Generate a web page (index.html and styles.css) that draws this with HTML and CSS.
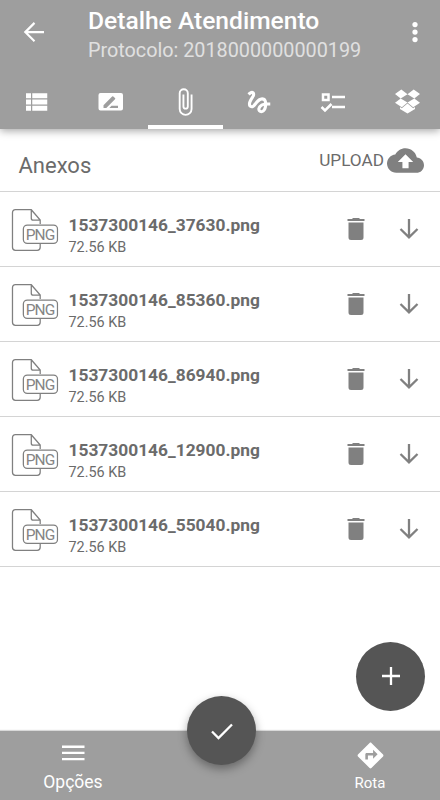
FILE: index.html
```html
<!DOCTYPE html>
<html lang="pt-BR">
<head>
  <meta charset="UTF-8" />
  <meta name="viewport" content="width=device-width, initial-scale=1.0"/>
  <title>Detalhe Atendimento</title>
  <link rel="stylesheet" href="styles.css">
</head>
<body>

  <!-- Shared icons -->
  <svg class="sprite">
    <symbol id="trash" viewBox="0 0 30 30"><path d="M7.500 8.500H22.500V23.500Q22.500 26 20 26H10Q7.500 26 7.500 23.500ZM6.500 5H11L12 4H18L19 5H23.500V7H6.500Z"/></symbol>
    <symbol id="download" viewBox="0 0 30 30"><path d="M15 5V23M6.500 15L15 23.300 23.500 15" fill="none" stroke="currentColor" stroke-width="2.300"/></symbol>
    <symbol id="file" viewBox="0 0 48 44">
      <path d="M29.5 16V12L20.500 1.500H4.500Q1.500 1.500 1.500 4.500V39.500Q1.500 42.500 4.500 42.500H26.500Q29.500 42.500 29.500 39.500V36M20.500 1.500V10Q20.500 12 22.500 12H29.500"/>
      <rect x="12.500" y="17" width="34.500" height="18.500" rx="4"/>
    </symbol>
  </svg>

  <header class="header">
    <div class="toolbar">
      <button class="back" aria-label="Voltar">
        <svg class="icon" viewBox="0 0 24 24"><path d="M20 11.200H7.200l5.800-5.800L11.800 4l-8 8 8 8 1.200-1.200L7.200 12.900H20z"/></svg>
      </button>
      <div class="heading">
        <h1>Detalhe Atendimento</h1>
        <p>Protocolo: 2018000000000199</p>
      </div>
      <button class="more" aria-label="Mais">
        <svg class="icon" viewBox="0 0 24 24"><circle cx="12" cy="6" r="2.100"/><circle cx="12" cy="12" r="2.100"/><circle cx="12" cy="18" r="2.100"/></svg>
      </button>
    </div>
    <nav class="tabs">
      <a class="tab"><svg class="icon" viewBox="0 0 24 24"><path d="M4 14h4v-4H4v4zm0 5h4v-4H4v4zM4 9h4V5H4v4zm5 5h12v-4H9v4zm0 5h12v-4H9v4zM9 5v4h12V5H9z"/></svg></a>
      <a class="tab"><svg class="icon" viewBox="0 0 30 30"><path fill-rule="evenodd" d="M4.500 6h20.500q2 0 2 2v13.500q0 2-2 2H4.500q-2 0-2-2V8q0-2 2-2zM7.500 18.200v2.800H10.300L19 12.300q.6-.6 0-1.200L17.300 9.500q-.6-.5-1.200 0zM15.500 18.800L13.300 21H22v-2.200z"/></svg></a>
      <a class="tab active"><svg class="icon" viewBox="0 0 24 24"><path d="M16.500 6V17.500A4 4 0 0 1 8.500 17.500V5A2.500 2.500 0 0 1 13.500 5V15.500A1 1 0 0 1 11.500 15.500V6H10V15.500A2.500 2.500 0 0 0 15 15.500V5A4 4 0 0 0 7 5V17.500A5.500 5.500 0 0 0 18 17.500V6Z"/></svg></a>
      <a class="tab"><svg class="icon" viewBox="0 0 24 24"><path d="M4.590 6.890c.7-.71 1.400-1.350 1.710-1.220.5.2 0 1.030-.3 1.520-.25.42-2.860 3.890-2.860 6.310 0 1.280.48 2.340 1.340 2.980.75.56 1.740.73 2.640.46 1.070-.31 1.950-1.400 3.060-2.770 1.210-1.490 2.830-3.440 4.080-3.440 1.630 0 1.650 1.010 1.760 1.790-3.780.64-5.380 3.670-5.380 5.370 0 1.700 1.440 3.090 3.210 3.090 1.630 0 4.290-1.330 4.690-6.100H21v-2.500h-2.470c-.15-1.650-1.090-4.200-4.030-4.200-2.250 0-4.180 1.910-4.940 2.840-.58.73-2.060 2.480-2.290 2.720-.25.3-.68.84-1.110.84-.45 0-.72-.83-.36-1.920.35-1.090 1.400-2.860 1.850-3.520.78-1.140 1.300-1.920 1.300-3.280C8.950 3.690 7.310 3 6.440 3 5.120 3 3.970 4 3.720 4.250c-.36.36-.66.66-.88.93l1.750 1.710zm9.290 11.660c-.31 0-.74-.26-.74-.72 0-.6.73-2.200 2.870-2.760-.3 2.690-1.430 3.480-2.130 3.480z"/></svg></a>
      <a class="tab"><svg class="icon line" viewBox="0 0 30 30"><path d="M5 7.500H10.500V13H5ZM14 10H27M14 20H27M3.500 20L7 23.500 13.500 17"/></svg></a>
      <a class="tab"><svg class="icon" viewBox="0 0 30 30"><path d="M9.300 2.500L15.500 7.200 8.700 11.500 3 7ZM21.700 2.500L15.500 7.200 22.300 11.500 28 7ZM3 15.800L8.700 11.500 15.500 15.500 9.800 20.200ZM28 15.800L22.300 11.500 15.500 15.500 21.200 20.200ZM15.500 16.600L21.200 21.300 23 20.100V22L15.500 26.500 8 22V20.100L9.800 21.300Z"/></svg></a>
    </nav>
  </header>

  <main class="content">
    <div class="section-head">
      <h2>Anexos</h2>
      <button class="upload">
        <span>UPLOAD</span>
        <svg viewBox="0 4 24 16"><path d="M19.350 10.040C18.670 6.590 15.640 4 12 4 9.110 4 6.600 5.640 5.350 8.040 2.340 8.360 0 10.910 0 14c0 3.310 2.690 6 6 6h13c2.760 0 5-2.240 5-5 0-2.640-2.050-4.780-4.650-4.960zM14 13v4h-4v-4H7l5-5 5 5h-3z"/></svg>
      </button>
    </div>

    <ul class="files">
      <li class="file">
        <div class="thumb"><svg><use href="#file"/></svg><span>PNG</span></div>
        <div class="info"><strong>1537300146_37630.png</strong><small>72.56 KB</small></div>
        <svg class="icon"><use href="#trash"/></svg>
        <svg class="icon"><use href="#download"/></svg>
      </li>
      <li class="file">
        <div class="thumb"><svg><use href="#file"/></svg><span>PNG</span></div>
        <div class="info"><strong>1537300146_85360.png</strong><small>72.56 KB</small></div>
        <svg class="icon"><use href="#trash"/></svg>
        <svg class="icon"><use href="#download"/></svg>
      </li>
      <li class="file">
        <div class="thumb"><svg><use href="#file"/></svg><span>PNG</span></div>
        <div class="info"><strong>1537300146_86940.png</strong><small>72.56 KB</small></div>
        <svg class="icon"><use href="#trash"/></svg>
        <svg class="icon"><use href="#download"/></svg>
      </li>
      <li class="file">
        <div class="thumb"><svg><use href="#file"/></svg><span>PNG</span></div>
        <div class="info"><strong>1537300146_12900.png</strong><small>72.56 KB</small></div>
        <svg class="icon"><use href="#trash"/></svg>
        <svg class="icon"><use href="#download"/></svg>
      </li>
      <li class="file">
        <div class="thumb"><svg><use href="#file"/></svg><span>PNG</span></div>
        <div class="info"><strong>1537300146_55040.png</strong><small>72.56 KB</small></div>
        <svg class="icon"><use href="#trash"/></svg>
        <svg class="icon"><use href="#download"/></svg>
      </li>
    </ul>
  </main>

  <button class="fab fab-add" aria-label="Adicionar">
    <svg viewBox="0 0 30 30"><path d="M15 6V24M6 15H24"/></svg>
  </button>

  <footer class="bottom-bar">
    <a class="bottom-item options">
      <svg viewBox="0 0 24 16"><path d="M1 1.700H23.500M1 7.900H23.500M1 14.100H23.500"/></svg>
      <span>Opções</span>
    </a>
    <a class="bottom-item route">
      <svg viewBox="0 0 24 24"><path d="M21.710 11.290l-9-9c-.39-.39-1.020-.39-1.410 0l-9 9c-.39.39-.39 1.020 0 1.410l9 9c.39.39 1.020.39 1.410 0l9-9c.39-.38.39-1.010 0-1.410zM14 14.500V12h-4v3H8v-4c0-.55.45-1 1-1h5V7.500l3.500 3.500-3.500 3.500z"/></svg>
      <span>Rota</span>
    </a>
    <button class="fab fab-done" aria-label="Concluir">
      <svg viewBox="0 0 30 30"><path d="M5 15.500L11.500 22 25 8.500"/></svg>
    </button>
  </footer>

</body>
</html>
```

FILE: styles.css
```css
* { margin: 0; padding: 0; box-sizing: border-box; }
body {
  display: flex;
  flex-direction: column;
  position: relative;
  height: 100vh;
  overflow: hidden;
  background-color: #fff;
  color: #6b6b6b;
  font-family: Roboto, sans-serif;
}
button {
  border: none;
  background: none;
  color: inherit;
  font-family: inherit;
}
svg { display: block; fill: currentColor; }
.sprite { position: absolute; width: 0; height: 0; }
.icon { width: 30px; height: 30px; flex: none; }

/* header */
.header {
  height: 129px;
  flex: none;
  background-color: #9e9e9e;
  color: #fff;
  box-shadow: 0 2px 8px rgba(0, 0, 0, 0.35);
}
.toolbar {
  display: flex;
  height: 74px;
  padding: 0 10px 0 19px;
}
.back, .more { height: 30px; margin-top: 17px; }
.heading {
  flex: 1;
  padding: 6px 0 0 39px;
  white-space: nowrap;
}
.heading h1 {
  font-size: 24.6px;
  font-weight: 500;
  line-height: 30px;
}
.heading p {
  font-size: 19.8px;
  line-height: 29px;
  color: #e0e0e0;
}
.tabs { display: flex; height: 55px; }
.tab {
  flex: 0 0 74.2px;
  display: flex;
  justify-content: center;
  padding: 12.5px 1.5px 0 0;
}
.active { border-bottom: 4px solid #fff; }
.line {
  fill: none;
  stroke: #fff;
  stroke-width: 2.5;
}

/* attachments */
.content { flex: 1; }
.section-head {
  display: flex;
  justify-content: space-between;
  height: 63px;
  padding: 0 16px 0 18.5px;
  border-bottom: 1px solid #d4d4d4;
}
.section-head h2 {
  padding-top: 22px;
  font-size: 22px;
  font-weight: 400;
  line-height: 30px;
}
.upload {
  display: flex;
  align-items: center;
  gap: 3px;
  height: 26px;
  margin-top: 18px;
  font-size: 17.2px;
}
.upload svg { width: 37px; height: 25px; color: #808080; }
.files { list-style: none; }
.file {
  display: flex;
  height: 75px;
  padding: 0 16px 0 11px;
  border-bottom: 1px solid #d4d4d4;
}
.file .icon { margin-top: 22px; color: #808080; }
.file .icon + .icon { margin-left: 23px; }
.thumb {
  position: relative;
  width: 47.5px;
  height: 44px;
  margin-top: 16px;
}
.thumb svg {
  width: 47.5px;
  height: 44px;
  fill: none;
  stroke: #808080;
  stroke-width: 1.3;
}
.thumb span {
  position: absolute;
  top: 18px;
  left: 12px;
  width: 34px;
  text-align: center;
  font-size: 15.5px;
  letter-spacing: -1px;
  line-height: 18px;
  color: #858585;
}
.info {
  flex: 1;
  display: flex;
  flex-direction: column;
  padding: 22px 0 0 10px;
}
.info strong { font-size: 17.35px; line-height: 22px; }
.info small { font-size: 14.4px; line-height: 23px; }

/* floating buttons */
.fab {
  position: absolute;
  display: flex;
  align-items: center;
  justify-content: center;
  width: 69px;
  height: 69px;
  border-radius: 50%;
  background-color: #555;
}
.fab svg {
  width: 30px;
  height: 30px;
  fill: none;
  stroke: #fff;
  stroke-width: 2.3;
}
.fab-add { right: 15px; bottom: 89.5px; }
.fab-done {
  left: 187px;
  top: -35px;
  box-shadow: 0 4px 10px rgba(0, 0, 0, 0.35);
}

/* bottom bar */
.bottom-bar {
  position: relative;
  display: flex;
  justify-content: space-between;
  flex: none;
  height: 69px;
  background-color: #9e9e9e;
  box-shadow: 0 -1px 1px rgba(0, 0, 0, 0.15);
  color: #fff;
}
.bottom-item {
  display: flex;
  flex-direction: column;
  align-items: center;
  width: 146px;
}
.options svg {
  width: 24px;
  height: 16px;
  margin-top: 14px;
  stroke: #fff;
  stroke-width: 2.4;
}
.options span { margin-top: 11px; font-size: 17.5px; line-height: 20px; }
.route { width: 140px; }
.route svg { width: 31px; height: 31px; margin-top: 9px; }
.route span { margin-top: 3px; font-size: 15px; line-height: 18px; }
```
